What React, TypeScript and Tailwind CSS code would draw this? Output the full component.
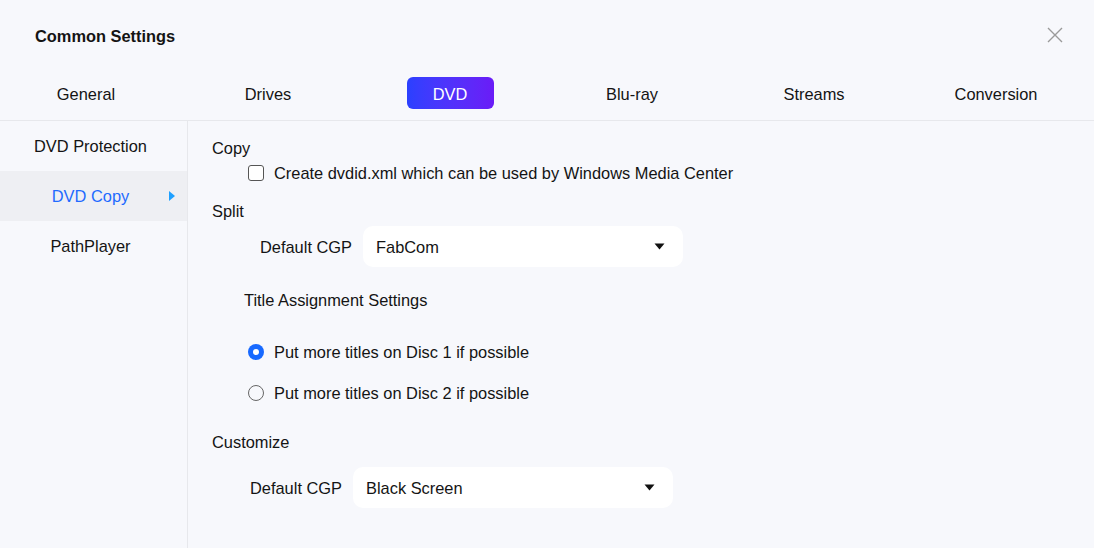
import React, { useState } from 'react';

const tabs = ['General', 'Drives', 'DVD', 'Blu-ray', 'Streams', 'Conversion'];
const sideItems = ['DVD Protection', 'DVD Copy', 'PathPlayer'];

const Caret = () => (
  <svg width="11" height="7" viewBox="0 0 11 7" className="shrink-0">
    <path d="M0.5 0.5 H10.5 L5.5 6.5 Z" fill="#111" />
  </svg>
);

const Select: React.FC<{ value: string }> = ({ value }) => (
  <div className="w-[320px] h-[41px] bg-white rounded-[10px] flex items-center justify-between pl-[13px] pr-[18px]">
    <span>{value}</span>
    <Caret />
  </div>
);

const Radio: React.FC<{ checked: boolean; label: string; onClick: () => void }> = ({ checked, label, onClick }) => (
  <div className="flex items-center h-[18px] pl-[36px] cursor-pointer" onClick={onClick}>
    {checked ? (
      <span className="w-[16px] h-[16px] rounded-full bg-[#1769ff] flex items-center justify-center">
        <span className="w-[6px] h-[6px] rounded-full bg-white" />
      </span>
    ) : (
      <span className="w-[16px] h-[16px] rounded-full border border-[#666]" />
    )}
    <span className="ml-[10px]">{label}</span>
  </div>
);

export default function App() {
  const [disc, setDisc] = useState(1);
  const [dvdid, setDvdid] = useState(false);

  return (
    <div
      className="w-[1094px] h-[548px] bg-[#f7f8fc] overflow-hidden text-[16.4px] text-[#141414]"
      style={{ fontFamily: '"Liberation Sans", Arial, sans-serif' }}
    >
      {/* Header */}
      <div className="h-[72px] flex items-center justify-between pl-[35px] pr-[31px]">
        <h1 className="font-bold text-[16.4px]">Common Settings</h1>
        <svg width="16" height="16" viewBox="0 0 16 16" className="mt-[-2px]">
          <path d="M1 1 L15 15 M15 1 L1 15" stroke="#9a9a9a" strokeWidth="1.4" />
        </svg>
      </div>

      {/* Tabs */}
      <div className="pt-[5px] pb-[11px] border-b border-[#e7e8ec]">
        <div className="flex ml-[-5px]">
          {tabs.map((t) => (
            <div key={t} className="w-[182px] flex justify-center">
              {t === 'DVD' ? (
                <div className="w-[87px] h-[32px] pt-[2px] rounded-[6px] bg-gradient-to-r from-[#2a40ff] to-[#6a1bf7] text-white flex items-center justify-center">
                  {t}
                </div>
              ) : (
                <div className="h-[32px] pt-[2px] flex items-center">{t}</div>
              )}
            </div>
          ))}
        </div>
      </div>

      {/* Body */}
      <div className="flex h-[427px]">
        <div className="w-[188px] border-r border-[#e7e8ec] shrink-0">
          {sideItems.map((s) => (
            <div
              key={s}
              className={
                s === 'DVD Copy'
                  ? 'relative h-[50px] pr-[6px] flex items-center justify-center bg-[#eeeff3] text-[#1f6bff]'
                  : 'h-[50px] pr-[6px] flex items-center justify-center'
              }
            >
              {s}
              {s === 'DVD Copy' && (
                <svg width="6" height="10" viewBox="0 0 6 10" className="absolute left-[169px] top-[20px]">
                  <path d="M0 0 L6 5 L0 10 Z" fill="#1ea0ff" />
                </svg>
              )}
            </div>
          ))}
        </div>

        <div className="flex-1 pl-[24px] pt-[18px] leading-[18px]">
          <div>Copy</div>
          <div className="mt-[7px] h-[18px] flex items-center pl-[36px] cursor-pointer" onClick={() => setDvdid(!dvdid)}>
            <span className="w-[16px] h-[16px] rounded-[3px] border border-[#555] bg-white flex items-center justify-center">
              {dvdid && (
                <svg width="10" height="8" viewBox="0 0 10 8">
                  <path d="M1 4 L4 7 L9 1" stroke="#1769ff" strokeWidth="1.6" fill="none" />
                </svg>
              )}
            </span>
            <span className="ml-[10px]">Create dvdid.xml which can be used by Windows Media Center</span>
          </div>

          <div className="mt-[20px]">Split</div>
          <div className="mt-[6px] flex items-center pl-[48px] gap-[12px]">
            <span className="w-[91px] whitespace-nowrap">Default CGP</span>
            <Select value="FabCom" />
          </div>

          <div className="mt-[24px] pl-[32px]">Title Assignment Settings</div>
          <div className="mt-[34px]">
            <Radio checked={disc === 1} label="Put more titles on Disc 1 if possible" onClick={() => setDisc(1)} />
          </div>
          <div className="mt-[23px]">
            <Radio checked={disc === 2} label="Put more titles on Disc 2 if possible" onClick={() => setDisc(2)} />
          </div>

          <div className="mt-[31px]">Customize</div>
          <div className="mt-[16px] flex items-center pl-[38px] gap-[12px]">
            <span className="w-[91px] whitespace-nowrap">Default CGP</span>
            <Select value="Black Screen" />
          </div>
        </div>
      </div>
    </div>
  );
}
